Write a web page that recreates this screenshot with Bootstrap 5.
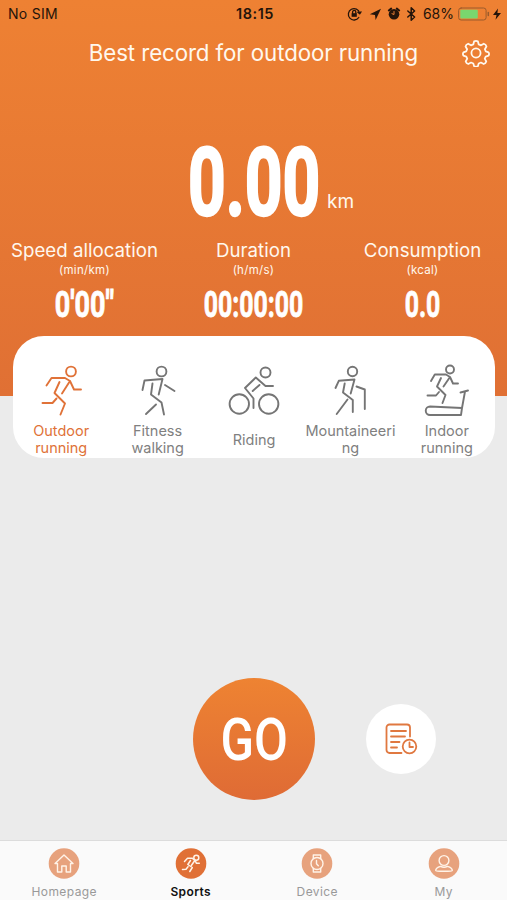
<!DOCTYPE html>
<html lang="en">
<head>
<meta charset="utf-8">
<meta name="viewport" content="width=device-width, initial-scale=1">
<title>Sports</title>
<link href="https://cdn.jsdelivr.net/npm/bootstrap@5.3.0/dist/css/bootstrap.min.css" rel="stylesheet">
<style>
  body { font-family: Inter, "Liberation Sans", sans-serif; background: #ebebeb; height: 900px; overflow: hidden; }
  svg { display: block; fill: none; stroke: currentColor; stroke-linecap: round; stroke-linejoin: round; }
  .hero { height: 396px; background: linear-gradient(#ee8133, #e07034); color: #fff8ee; }
  .status { height: 28px; color: #24140a; font-size: 14px; line-height: 28px; padding: 0 5px 0 8px; }
  .status > * { flex: 1 1 0; }
  .carrier { letter-spacing: .3px; }
  .clock { font-size: 14.5px; font-weight: 600; letter-spacing: .5px; }
  .title-row { height: 49px; padding: 0 17px; }
  .side { width: 28px; }
  .title { font-size: 22.3px; line-height: 50px; white-space: nowrap; letter-spacing: -.1px; }
  .figures { font-family: Roboto, sans-serif; font-weight: 700; color: #fff; white-space: nowrap; }
  .distance { height: 162px; padding: 62px 0 0 188px; }
  .distance .figures { font-size: 94px; line-height: 88px; width: 133px; transform: scaleX(.7); transform-origin: left; -webkit-text-stroke: 2.4px #fff; }
  .unit { font-size: 19px; line-height: 24px; padding: 51px 0 0 6px; }
  .stat-name { font-size: 18.7px; line-height: 24px; white-space: nowrap; }
  .stat-unit { font-size: 11.5px; line-height: 14px; letter-spacing: .3px; }
  .stat .figures { font-size: 36px; line-height: 42px; margin-top: 7px; transform: scaleX(.69); -webkit-text-stroke: .8px #fff; }
  .stat .pace { transform: scaleX(.75); }
  .modes { margin: -60px 12px 0 13px; height: 122px; border-radius: 31px; color: #757575; }
  .mode { flex: 1 1 0; min-width: 0; padding-top: 25px; }
  .mode-label { height: 36px; width: 93px; font-size: 14.5px; line-height: 17px; margin-top: 4px; overflow-wrap: anywhere; color: #808080; }
  .mode.on, .mode.on .mode-label { color: #e07238; }
  .controls { margin-top: 220px; height: 122px; padding-left: 193px; gap: 51px; }
  .go { width: 122px; height: 122px; background: linear-gradient(#ee8332, #df6b35); }
  .go span { font: 500 60px/123px Roboto, sans-serif; transform: scaleX(.82); color: #fff; }
  .history { width: 70px; height: 70px; color: #e07840; }
  .tabs { height: 60px; background: #fafafa; border-top: 1px solid #dcdcdc; color: #999; font-size: 12px; padding-left: 1px; }
  .tab { flex: 1 1 0; padding-top: 7px; line-height: 16px; letter-spacing: .4px; }
  .tab svg { margin-bottom: 5px; color: #fff3e8; }
  .disc { fill: #e7a27d; stroke: none; }
  .tab.on { color: #111; font-weight: 600; }
  .tab.on .disc { fill: #e07036; }
</style>
<script src="https://cdn.jsdelivr.net/npm/bootstrap@5.3.0/dist/js/bootstrap.bundle.min.js"></script>
</head>
<body class="d-flex flex-column">
<header class="hero flex-shrink-0">
  <div class="status d-flex">
    <div class="carrier">No SIM</div>
    <div class="clock text-center">18:15</div>
    <div class="d-flex justify-content-end align-items-center">
      <svg class="flex-shrink-0" width="72" height="16" viewBox="0 0 72 16" stroke-width="1.3">
        <path d="M11.800 11.500A5.700 5.700 0 1 1 12.600 7M10.800 6.200l1.900 1.600 1.300-2"/>
        <path d="M5.600 7.300V6a1.600 1.600 0 0 1 3.200 0v1.300"/>
        <rect x="4.600" y="7.200" width="5.200" height="3.600" fill="currentColor" stroke="none"/>
        <path d="M34 2.800L22.800 8.200l5.200.7.6 5.100z" fill="currentColor" stroke="none"/>
        <circle cx="47" cy="8.300" r="5.300" fill="currentColor" stroke="none"/>
        <path d="M41.800 4.500l2.400-1.900M52.200 4.500l-2.400-1.900" stroke-width="2"/>
        <path d="M47 5.500v3l-2-.8" stroke="#eb7f33" stroke-width="1"/>
        <path d="M60.800 5l6.800 6-3.400 3.200V1.800L67.600 5l-6.800 6" stroke-width="1.500"/>
      </svg>
      <span class="ms-1">68%</span>
      <svg class="flex-shrink-0 ms-1" width="44" height="16" viewBox="0 0 44 16">
        <rect x=".6" y="2" width="27.500" height="12" rx="2.500" stroke="#9b5b2c"/>
        <rect x="2.300" y="3.700" width="17.500" height="8.700" rx="1" fill="#79d66e" stroke="none"/>
        <path d="M30.300 6.500v3" stroke="#9b5b2c" stroke-width="1.500"/>
        <path d="M40 2.500L35 9h3.500l-1 4.700L43 7h-3.600z" fill="currentColor" stroke="none"/>
      </svg>
    </div>
  </div>
  <div class="title-row d-flex align-items-center justify-content-between">
    <div class="side"></div>
    <div class="title">Best record for outdoor running</div>
    <svg width="28" height="28" viewBox="-1 -1 30 30" stroke-width="1.900">
      <circle cx="14" cy="14" r="4.900"/>
      <path d="M12 1.500q2-1 4 0l.9 3.300 2.500 1 3-1.700q2.300.8 2.800 2.900l-1.700 3 1 2.300 3 1q1 1.700 0 3.500l-3.100 1-1 2.300 1.600 3q-.6 2.100-2.700 2.700l-3-1.600-2.400 1-.9 3q-2 1-4 0l-.9-3-2.400-1-3 1.600q-2.100-.6-2.700-2.700l1.600-3-1-2.300-3.100-1q-1-1.800 0-3.500l3-1 1-2.300-1.700-3q.5-2.100 2.800-2.900l3 1.700 2.500-1z"/>
    </svg>
  </div>
  <div class="distance d-flex">
    <div class="figures">0.00</div>
    <div class="unit">km</div>
  </div>
  <div class="row g-0 text-center">
    <div class="col stat"><div class="stat-name">Speed allocation</div><div class="stat-unit">(min/km)</div><div class="figures pace">0'00"</div></div>
    <div class="col stat"><div class="stat-name">Duration</div><div class="stat-unit">(h/m/s)</div><div class="figures">00:00:00</div></div>
    <div class="col stat"><div class="stat-name">Consumption</div><div class="stat-unit">(kcal)</div><div class="figures">0.0</div></div>
  </div>
</header>

<section class="modes bg-white d-flex text-center flex-shrink-0">
  <div class="mode on d-flex flex-column align-items-center">
    <svg width="52" height="56" viewBox="0 0 52 56" stroke-width="1.900">
      <circle cx="36" cy="10.500" r="4.900"/>
      <path d="M11.500 24.500L16.500 17H30l5 3-8 12.500M35 20l4 8.500h7M24.500 21l-5 11L30 42.500 25.500 53.500M7.500 42h10l4-4.500"/>
    </svg>
    <div class="mode-label d-flex align-items-center justify-content-center"><span>Outdoor<br>running</span></div>
  </div>
  <div class="mode d-flex flex-column align-items-center">
    <svg width="52" height="56" viewBox="0 0 52 56" stroke-width="1.900">
      <circle cx="29.500" cy="10.500" r="4.900"/>
      <path d="M10.500 29l2-9.500 18-1.500-3.800 15.500M20.500 22.500l-1.500 11 10.500 8 2.500 12M33 24l9.500 6M24 43.500l-10 9.500"/>
    </svg>
    <div class="mode-label d-flex align-items-center justify-content-center"><span>Fitness<br>walking</span></div>
  </div>
  <div class="mode d-flex flex-column align-items-center">
    <svg width="52" height="56" viewBox="0 0 52 56" stroke-width="1.900">
      <circle cx="37.500" cy="11.500" r="5"/><circle cx="11.300" cy="43" r="9.700"/><circle cx="40.700" cy="43" r="9.700"/>
      <path d="M45 25h-7.500L27.800 16.500 17 27l8.500 10.500V47M31.500 24l-6.800 6"/>
    </svg>
    <div class="mode-label d-flex align-items-center justify-content-center"><span>Riding</span></div>
  </div>
  <div class="mode d-flex flex-column align-items-center">
    <svg width="52" height="56" viewBox="0 0 52 56" stroke-width="1.900">
      <circle cx="28.500" cy="10.500" r="4.700"/>
      <path d="M11.500 27l3.300-7.200L30.500 18.500l-3.800 14M20.700 22.500l-1.700 9 9.800 7.500v12M32.500 25.500l8.300 3V48M23.500 38.500L12.700 53"/>
    </svg>
    <div class="mode-label d-flex align-items-center justify-content-center"><span>Mountaineering</span></div>
  </div>
  <div class="mode d-flex flex-column align-items-center">
    <svg width="52" height="56" viewBox="0 0 52 56" stroke-width="1.900">
      <circle cx="29" cy="8.500" r="4"/>
      <path d="M10 20l3.800-6.500H25l4 2.500-6.500 9.500M29 16l3 6.500h5M20 17l-4 8.500 8.500 8.500-3 8M6.500 34.500h8.500l3-3.500"/>
      <path d="M9 45.500l32 1.500-1 7H9a4.200 4.200 0 0 1 0-8.500zM41 47l3-16.500M39.500 31.500l7.500-2"/>
    </svg>
    <div class="mode-label d-flex align-items-center justify-content-center"><span>Indoor<br>running</span></div>
  </div>
</section>

<main class="controls d-flex align-items-center flex-shrink-0">
  <div class="go rounded-circle d-flex justify-content-center"><span>GO</span></div>
  <div class="history bg-white rounded-circle d-flex align-items-center justify-content-center">
    <svg width="34" height="32" viewBox="0 0 34 32" stroke-width="1.800">
      <path d="M17.500 30H5.500a3 3 0 0 1-3-3V4.500a3 3 0 0 1 3-3H23a3 3 0 0 1 3 3v9M7 8h15M7 13.500h14M7 19h8.500M7 24.500h6"/>
      <circle cx="25.500" cy="23.500" r="6.800"/><path d="M25.500 19.500v4.500h3.500"/>
    </svg>
  </div>
</main>

<nav class="tabs d-flex text-center mt-auto flex-shrink-0">
  <div class="tab d-flex flex-column align-items-center">
    <svg width="32" height="31" viewBox="0 0 32 31" stroke-width="1.400"><circle class="disc" cx="16" cy="15.500" r="15.300"/>
      <path d="M7 15.500L16 7l9 8.500h-2.500v8.500h-4.300v-6h-4.400v6H9.500v-8.500z"/></svg>
    Homepage
  </div>
  <div class="tab on d-flex flex-column align-items-center">
    <svg width="32" height="31" viewBox="0 0 32 31" stroke-width="1.500"><circle class="disc" cx="16" cy="15.500" r="15.300"/>
      <circle cx="21.300" cy="9.800" r="2.500"/>
      <path d="M9.500 13.500l3-3.200h5l2.500 2-3.500 5M20 12.300l1.500 3h2.800M15.500 12.500l-2.700 4 4.500 3-2.500 4M7.500 21.500l3.500-.3 2-2.500"/></svg>
    Sports
  </div>
  <div class="tab d-flex flex-column align-items-center">
    <svg width="32" height="31" viewBox="0 0 32 31" stroke-width="1.400"><circle class="disc" cx="16" cy="15.500" r="15.300"/>
      <circle cx="16" cy="15.500" r="6"/><path d="M12.300 10.500V7h7.400v3.500M12.300 20.500V24h7.400v-3.500M15.500 12.500v3.200l1.800 2"/></svg>
    Device
  </div>
  <div class="tab d-flex flex-column align-items-center">
    <svg width="32" height="31" viewBox="0 0 32 31" stroke-width="1.400"><circle class="disc" cx="16" cy="15.500" r="15.300"/>
      <circle cx="16" cy="12.500" r="4.900"/><path d="M12.500 18.300c-2.800.8-4.800 2.500-4.800 4.200 0 1.200 16.600 1.200 16.600 0 0-1.700-2-3.400-4.800-4.200-2 1-5 1-7 0z"/></svg>
    My
  </div>
</nav>
</body>
</html>
